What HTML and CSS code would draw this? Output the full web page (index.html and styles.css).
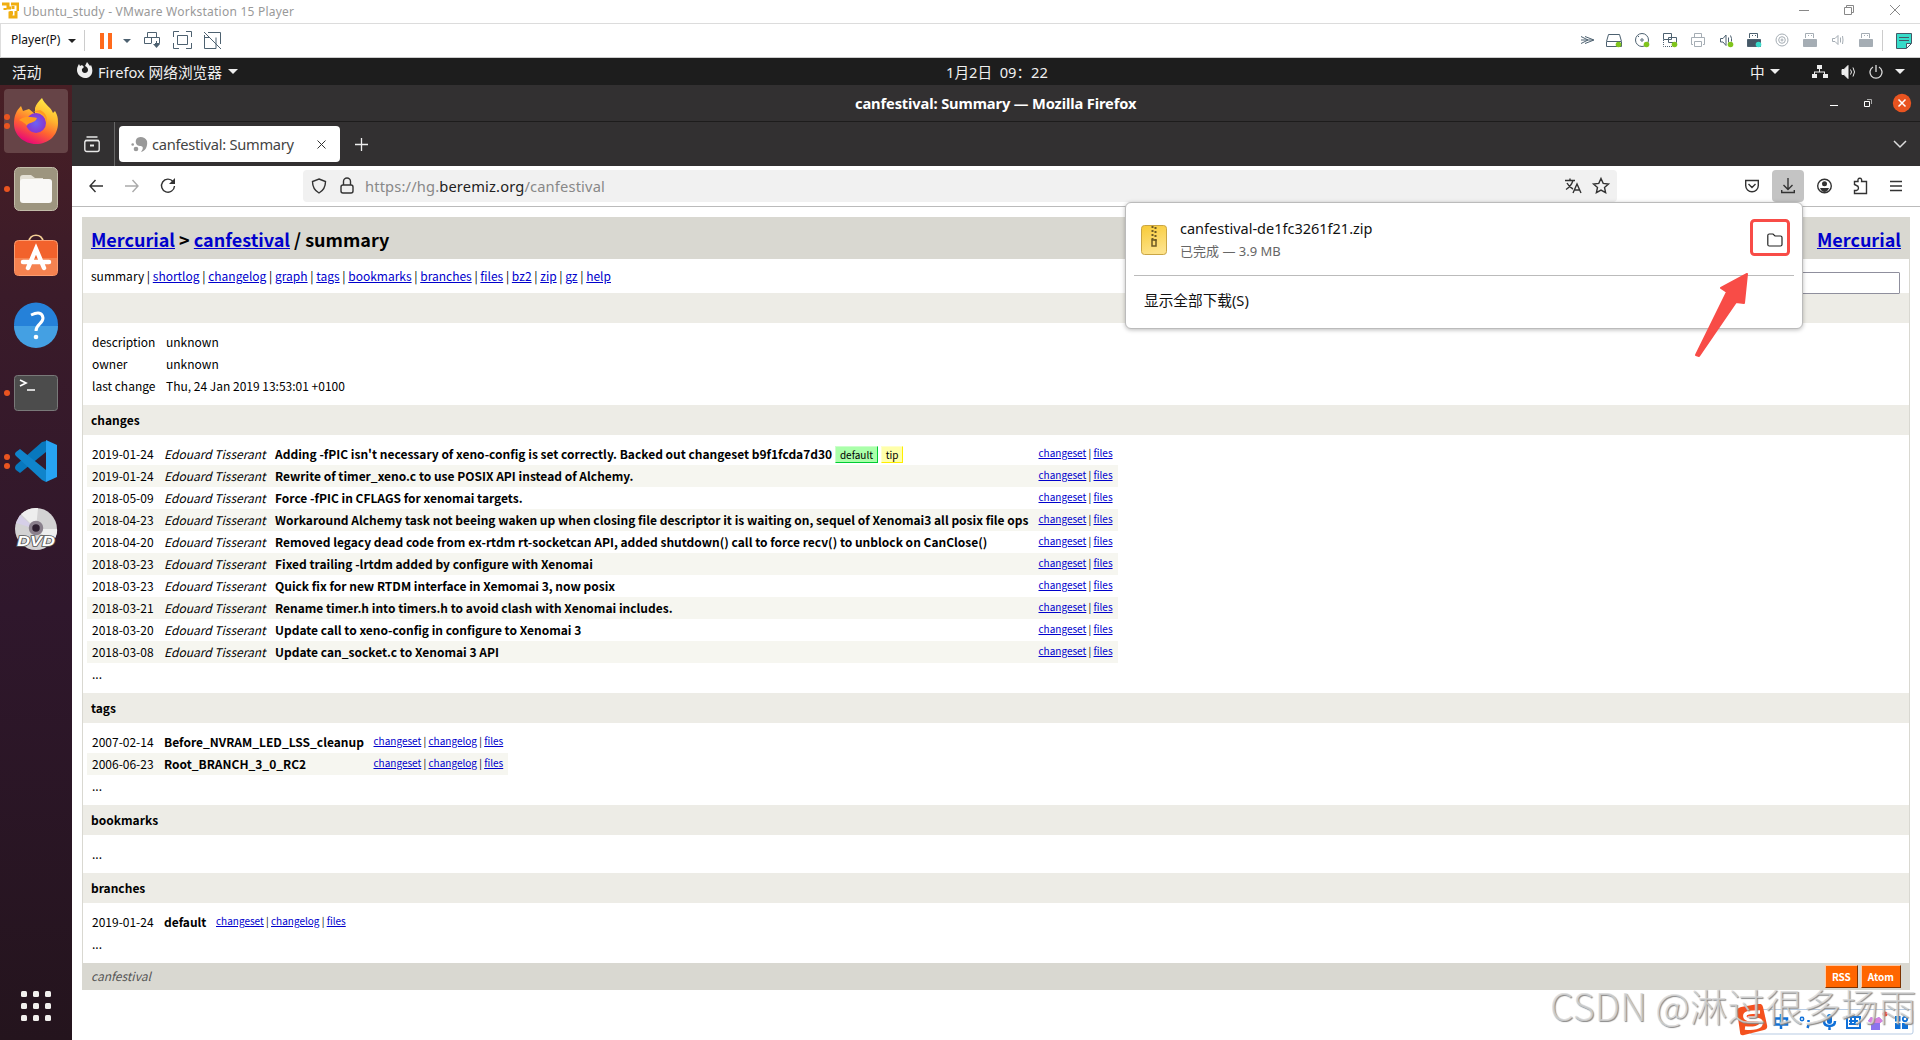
FILE: index.html
```html
<!DOCTYPE html>
<html lang="zh-CN">
<head>
<meta charset="utf-8">
<title>Ubuntu_study - VMware Workstation 15 Player</title>
<link rel="stylesheet" href="styles.css">
</head>
<body>
<header class="vm-title">
  <svg class="vm-logo" width="17" height="17" viewBox="0 0 17 17" fill="none" stroke="#f0ae10" stroke-width="3"><path d="M0 2h6v4h3M9 2h7v7M3 6v2M11 4v3M14 9v6H8v-4h3M9 15V9" /></svg>
  <span class="vm-name">Ubuntu_study - VMware Workstation 15 Player</span>
  <svg class="vm-win" width="120" height="20" viewBox="0 0 120 20" fill="none" stroke="#888" stroke-width="1"><path d="M7 10.500h10M52.500 7.500h7v7h-7zM54.500 7v-1.500h7v7H60M98 5l10 10M108 5l-10 10"/></svg>
</header>
<nav class="vm-bar">
  <span class="player">Player(P)</span><i class="caret dark"></i><i class="sep s1"></i>
  <svg class="pause" width="12" height="16"><path fill="#ff6a1c" d="M0 0h4v16H0zM8 0h4v16H8z"/></svg><i class="caret slate"></i>
  <svg class="vm-tools" width="80" height="20" viewBox="0 0 80 20" fill="none" stroke="#4d6170"><path d="M4.500 7.500v-5h9v5M1.500 7.500h15v6H12M1.500 7.500v6H8M8.500 7.500v6M13.500 11v6M30.500 7V1.500H36M43 1.500h5.500V7M48.500 13v5.500H43M36 18.500h-5.500V13M34.500 5.500h10v9h-10zM65 2.500h12.500V14M61.500 5v13.500H73M61.500 7.500H66M73 7.500v11M61 2l17 17"/><path d="M10 14h7l-3.500 4z" fill="#4d6170" stroke="none"/></svg>
  <div class="devices">
    <svg viewBox="0 0 20 20"><path d="M5 6.500l7 3.500-7 3.500M9 6.500l9 3.500-9 3.500M5 10h12" /></svg>
    <svg viewBox="0 0 20 20"><path d="M4.500 4.500h11l2 7v5h-15v-5zM3 11.500h14"/><circle class="g" cx="14.500" cy="14.500" r="2.800"/></svg>
    <svg viewBox="0 0 20 20"><circle cx="10" cy="10" r="6.500"/><circle cx="10" cy="10" r="1.200"/><path d="M6 7l1-1"/><circle class="g" cx="14.500" cy="14.500" r="2.800"/></svg>
    <svg viewBox="0 0 20 20"><path d="M3.500 3.500h8v6h-8zM8.500 7.500h8v5h-8z"/><path stroke-dasharray="1 1" d="M3.500 10v6.500H12"/><circle class="g" cx="14.500" cy="14.500" r="2.800"/></svg>
    <svg class="off" viewBox="0 0 20 20"><path d="M6.500 7.500v-4h7v4M5 14.500H3.500v-7h13v7H15M6.500 11.500h7v5h-7z"/></svg>
    <svg viewBox="0 0 20 20"><path d="M4.500 8.500H7l3-3.500v10.500l-3-3.500H4.500zM12.500 7.500v5M14.500 5.500q1.500 3 1 6"/><circle class="g" cx="14.500" cy="14.500" r="2.800"/></svg>
    <svg viewBox="0 0 20 20"><path d="M5.500 8V3.500h8V8M8 5.500h1M11 5.500h1"/><path fill="#455866" d="M3.500 9.500h13v7h-13z"/><circle cx="14.500" cy="14.500" r="2.800" fill="#38dccb" stroke="none"/></svg>
    <svg class="off" viewBox="0 0 20 20"><circle cx="10" cy="10" r="6"/><circle cx="10" cy="10" r="3.300"/><circle cx="10" cy="10" r="1"/></svg>
    <svg class="off" viewBox="0 0 20 20"><path d="M5.500 8V3.500h8V8M8 5.500h1M11 5.500h1"/><path fill="#a5adb4" d="M3.500 9.500h13v7h-13z"/></svg>
    <svg class="off" viewBox="0 0 20 20"><path d="M4.500 8.500H7l3-3v9l-3-3H4.500zM12.500 7.500v5M14.500 6q1 4 0 8"/></svg>
    <svg class="off" viewBox="0 0 20 20"><path d="M5.500 8V3.500h8V8M8 5.500h1M11 5.500h1"/><path fill="#a5adb4" d="M3.500 9.500h13v7h-13z"/></svg>
  </div>
  <i class="sep s2"></i>
  <svg class="note" width="16" height="16" fill="#36dcc9" stroke="#455866"><path d="M.5.5h15v10l-5 5H.5zM15 10.500h-4.500V15M3 4.500h10M3 7.500h10"/></svg>
</nav>

<div class="gnome">
  <span class="act">活动</span>
  <svg class="ffmono" width="17" height="17" viewBox="0 0 17 17"><path fill="#eee" fill-rule="evenodd" d="M1 8C1 5 2 4 3 2l1 2 2-1 2 2-2 2c-1 5 6 5 6 1 0-2-1-3-3-4l2-4 3 4 1-1c3 6 1 13-6 13C4 15.500 1 12 1 8z"/></svg>
  <span class="app">Firefox 网络浏览器</span><i class="caret big"></i>
  <span class="clock">1月2日&nbsp; 09：22</span>
  <span class="ime">中</span><i class="caret big"></i>
  <svg class="net" width="16" height="14" fill="#eee"><path d="M5 0h5v4H8v2.500h5V9h3v4h-5V9h1V7.500H3V9h2v4H0V9h2V6.500h5V4H5z"/></svg>
  <svg class="vol" width="16" height="14" fill="none" stroke="#eee"><path fill="#eee" d="M1 4.500h2l4-4v13l-4-4H1z"/><path d="M9.500 4.500q2 2.500 0 5M12 2.500q3 4.500 0 9"/></svg>
  <svg class="pow" width="14" height="14" fill="none" stroke="#ddd"><path stroke-width="1.300" d="M4 2a6 6 0 1 0 6 0M7 0v7"/></svg><i class="caret big last"></i>
</div>

<div class="desk">
  <aside class="dock">
    <div class="tile on two"><svg viewBox="0 0 46 48" width="46" height="48"><defs><linearGradient id="fo" x1=".75" y1="0" x2=".3" y2="1"><stop offset="0" stop-color="#fff14a"/><stop offset=".35" stop-color="#ffb82e"/><stop offset=".65" stop-color="#ff6430"/><stop offset="1" stop-color="#e6007d"/></linearGradient><radialGradient id="fp"><stop offset="0" stop-color="#6a63f5"/><stop offset="1" stop-color="#8a35cf"/></radialGradient></defs><path fill="url(#fo)" d="M1 27C1 19 3 14 8 9l2 5 6-2 6 5 0-6C23 7 26 4 29 1c3 7 9 9 11 15l2-2c3 5 3 8 3 12 0 13-10 21-22 21S1 38 1 27z"/><circle cx="23" cy="26" r="10" fill="url(#fp)"/><path fill="#ff9b20" d="M6 23c6-5 13-3 18-2-2 6-10 4-10 8-2-3-4-4-8-6zM19 15c8-1 15 4 14 12 3-6-1-12-6-14z"/></svg></div>
    <div class="tile one"><svg viewBox="0 0 46 46" width="46" height="46"><rect x="1.500" y="1.500" width="43" height="43" rx="5" fill="#9d957f" stroke="#c2bca9"/><path fill="#e4e0d5" d="M7 12q0-3 3-3h8l4 3h8v8H7z"/><rect x="7" y="13" width="32" height="24" rx="3" fill="#f9f8f6"/></svg></div>
    <div class="tile"><svg viewBox="0 0 46 46" width="46" height="46"><path d="M16 8c0-9 14-9 14 0" fill="none" stroke="#f3cf95" stroke-width="1.700"/><rect x="1.500" y="6.500" width="43" height="35" rx="4" fill="#f2622c" stroke="#fb9c70"/><path fill="#f58250" d="M2 24h42v14q0 3-3 3H5q-3 0-3-3z"/><path d="M15 34l8-19 8 19M10 28h26" fill="none" stroke="#fff" stroke-width="4.500" stroke-linecap="round"/></svg></div>
    <div class="tile"><svg viewBox="0 0 46 46" width="46" height="46"><circle cx="23" cy="22.500" r="22" fill="#2581d9"/><path fill="#44a0e3" d="M1 24h44a22 22 0 0 1-44 0z"/><path d="M18 13q11-5 12 3c0 6-7 6-7 13" fill="none" stroke="#fff" stroke-width="3"/><circle cx="23" cy="35" r="2.300" fill="#fff"/></svg></div>
    <div class="tile one"><svg viewBox="0 0 46 46" width="46" height="46"><rect x="1.500" y="5.500" width="43" height="35" rx="3" fill="#4c4c4c" stroke="#797979"/><path d="M7 10l6 3-6 3M14 20h8" fill="none" stroke="#fff" stroke-width="1.700"/></svg></div>
    <div class="tile two"><svg viewBox="0 0 46 46" width="46" height="46"><path fill="#0878bd" d="M3 32l4 3L33 14V3L29 4 3 27q-2 3 0 5z"/><path fill="#1084cb" d="M3 14l4-3 26 21v12l-4-2L3 18q-2-2 0-4z"/><path fill="#27a3f2" d="M33 2l11 5v32l-11 5z"/></svg></div>
    <div class="tile"><svg viewBox="0 0 46 46" width="46" height="46"><circle cx="23" cy="23" r="21" fill="#d3d2d3"/><path fill="#eee" d="M23 23L8 8q8-7 17-6zM23 23l16 14q6-8 5-14z"/><path fill="#d6cfe8" d="M23 23L3 17l4-8z"/><circle cx="23" cy="22" r="5.500" fill="#2e2030" stroke="#8a808c" stroke-width="3.500"/><text x="4" y="40" class="dvd" textLength="38" lengthAdjust="spacingAndGlyphs">DVD</text></svg></div>
    <div class="apps"><i></i><i></i><i></i><i></i><i></i><i></i><i></i><i></i><i></i></div>
  </aside>

  <main class="firefox">
    <div class="ff-title"><span class="ff-name">canfestival: Summary — Mozilla Firefox</span>
      <svg class="ff-win" width="90" height="20" viewBox="0 0 90 20" fill="none" stroke="#fff"><path d="M8 12.500h8M42.500 8.500h5v5h-5z"/><path stroke="#aaa" d="M45 6.500h4.500V11"/><circle cx="80" cy="10" r="9.200" fill="#e95420" stroke="none"/><path stroke-width="1.500" d="M76.500 6.500l7 7M83.500 6.500l-7 7"/></svg></div>
    <div class="tabs">
      <svg class="recent" width="16" height="17" fill="none" stroke="#e8e8e8" stroke-width="1.400"><path d="M2.500 1h11M1 4.500h14"/><rect x=".8" y="4.500" width="14.400" height="11" rx="2"/><path d="M6 9.500h4" stroke-width="2"/></svg>
      <div class="tab">
        <svg width="17" height="17" viewBox="0 0 17 17" fill="#999"><path d="M5 4C6 0 14 0 16 5c1 6-2 10-6 11 3-4 2-6-1-6-3 0-5-3-4-6z"/><circle cx="5" cy="13" r="2.300"/><circle cx="1.700" cy="8.500" r="1.300"/></svg>
        <span class="tab-name">canfestival: Summary</span>
        <svg class="tab-x" width="9" height="9" stroke="#333" fill="none"><path d="M.5.5l8 8M8.500.5l-8 8"/></svg>
      </div>
      <svg class="plus" width="13" height="13" stroke="#eee" stroke-width="1.300"><path d="M6.500 0v13M0 6.500h13"/></svg>
      <svg class="chev" width="14" height="9" fill="none" stroke="#ddd" stroke-width="1.500"><path d="M1 1l6 6 6-6"/></svg>
    </div>
    <div class="navbar">
      <svg class="btn" viewBox="0 0 32 32"><path d="M23 16H10M15.500 10L10 16l5.500 6"/></svg>
      <svg class="btn dim" viewBox="0 0 32 32"><path d="M9 16h13M16.500 10l5.500 6-5.500 6"/></svg>
      <svg class="btn" viewBox="0 0 32 32"><path d="M21 11.500a6.500 6.500 0 1 0 1.500 4.500"/><path fill="#333" stroke="none" d="M23 8v6h-6z"/></svg>
      <div class="url">
        <svg viewBox="0 0 28 32"><path d="M14 9l6.500 2.500c0 6-2 9-6.500 11.500-4.500-2.500-6.500-5.500-6.500-11.500z"/></svg>
        <svg viewBox="0 0 28 32"><rect x="8" y="15" width="12" height="8" rx="2"/><path d="M10.500 15v-3.500a3.500 3.500 0 0 1 7 0V15"/></svg>
        <span class="addr">https://hg.<b>beremiz.org</b>/canfestival</span>
        <svg class="tr" viewBox="0 0 28 32"><path d="M6 10.500h10M11 8.500v2M14 10.500q-2 6-7 9M8 13q2 4 6 6M14 23l4-9 4 9M15.500 20h5"/></svg>
        <svg viewBox="0 0 28 32"><path d="M14 8.500l2.200 4.900 5.300.6-4 3.500 1.100 5.200-4.600-2.600-4.600 2.600 1.100-5.200-4-3.500 5.300-.6z"/></svg>
      </div>
      <svg class="btn pocket" viewBox="0 0 32 32"><path d="M9.700 10.500h12.600v5a6.300 6.300 0 0 1-12.600 0zM12.500 14l3.500 3.500 3.500-3.500"/></svg>
      <svg class="btn down" viewBox="0 0 32 32"><path d="M16 8v11M11.500 15l4.500 4.500 4.500-4.500M9.700 20v2.500h12.600V20"/></svg>
      <svg class="btn" viewBox="0 0 32 32"><circle cx="16.500" cy="16" r="6.800"/><circle cx="16.500" cy="13.800" r="2.500" fill="#333" stroke="none"/><path d="M12 18h9q-1.500 4-4.500 4t-4.500-4z" fill="#333" stroke="none"/></svg>
      <svg class="btn" viewBox="0 0 32 32"><path d="M10.500 14.500v-3H14q-.5-3.300 1.800-3.300t1.800 3.300h4.900v12h-12v-3h2q2-.5 2-2.500t-2-2.500z"/></svg>
      <svg class="btn" viewBox="0 0 32 32"><path d="M10 11.500h12M10 16h12M10 20.500h12"/></svg>
    </div>

    <section class="page">
      <div class="hg">
        <div class="hg-head"><div><a>Mercurial</a> &gt; <a>canfestival</a> / summary</div><a>Mercurial</a></div>
        <div class="hg-nav"><span>summary | <a>shortlog</a> | <a>changelog</a> | <a>graph</a> | <a>tags</a> | <a>bookmarks</a> | <a>branches</a> | <a>files</a> | <a>bz2</a> | <a>zip</a> | <a>gz</a> | <a>help</a></span><div class="search"></div></div>
        <div class="band"></div>
        <div class="meta"><span>description</span><span>unknown</span><span>owner</span><span>unknown</span><span>last change</span><span>Thu, 24 Jan 2019 13:53:01 +0100</span></div>
        <div class="band">changes</div>
        <div class="list changes">
          <div class="row"><span>2019-01-24</span><i>Edouard Tisserant</i><b>Adding -fPIC isn't necessary of xeno-config is set correctly. Backed out changeset b9f1fcda7d30 <em class="lab green">default</em> <em class="lab yellow">tip</em></b><small><a>changeset</a> | <a>files</a></small></div>
          <div class="row"><span>2019-01-24</span><i>Edouard Tisserant</i><b>Rewrite of timer_xeno.c to use POSIX API instead of Alchemy.</b><small><a>changeset</a> | <a>files</a></small></div>
          <div class="row"><span>2018-05-09</span><i>Edouard Tisserant</i><b>Force -fPIC in CFLAGS for xenomai targets.</b><small><a>changeset</a> | <a>files</a></small></div>
          <div class="row"><span>2018-04-23</span><i>Edouard Tisserant</i><b>Workaround Alchemy task not beeing waken up when closing file descriptor it is waiting on, sequel of Xenomai3 all posix file ops</b><small><a>changeset</a> | <a>files</a></small></div>
          <div class="row"><span>2018-04-20</span><i>Edouard Tisserant</i><b>Removed legacy dead code from ex-rtdm rt-socketcan API, added shutdown() call to force recv() to unblock on CanClose()</b><small><a>changeset</a> | <a>files</a></small></div>
          <div class="row"><span>2018-03-23</span><i>Edouard Tisserant</i><b>Fixed trailing -lrtdm added by configure with Xenomai</b><small><a>changeset</a> | <a>files</a></small></div>
          <div class="row"><span>2018-03-23</span><i>Edouard Tisserant</i><b>Quick fix for new RTDM interface in Xemomai 3, now posix</b><small><a>changeset</a> | <a>files</a></small></div>
          <div class="row"><span>2018-03-21</span><i>Edouard Tisserant</i><b>Rename timer.h into timers.h to avoid clash with Xenomai includes.</b><small><a>changeset</a> | <a>files</a></small></div>
          <div class="row"><span>2018-03-20</span><i>Edouard Tisserant</i><b>Update call to xeno-config in configure to Xenomai 3</b><small><a>changeset</a> | <a>files</a></small></div>
          <div class="row"><span>2018-03-08</span><i>Edouard Tisserant</i><b>Update can_socket.c to Xenomai 3 API</b><small><a>changeset</a> | <a>files</a></small></div>
        </div>
        <div class="more">...</div>
        <div class="band">tags</div>
        <div class="list tags">
          <div class="row"><span>2007-02-14</span><b>Before_NVRAM_LED_LSS_cleanup</b><small><a>changeset</a> | <a>changelog</a> | <a>files</a></small></div>
          <div class="row"><span>2006-06-23</span><b>Root_BRANCH_3_0_RC2</b><small><a>changeset</a> | <a>changelog</a> | <a>files</a></small></div>
        </div>
        <div class="more">...</div>
        <div class="band">bookmarks</div>
        <div class="list"></div>
        <div class="more">...</div>
        <div class="band">branches</div>
        <div class="list branches">
          <div class="row"><span>2019-01-24</span><b>default</b><small><a>changeset</a> | <a>changelog</a> | <a>files</a></small></div>
        </div>
        <div class="more">...</div>
        <div class="hg-foot"><i>canfestival</i><span class="feed">RSS</span><span class="feed">Atom</span></div>
      </div>
    </section>
  </main>
</div>

<div class="popup">
  <div class="dl">
    <svg width="26" height="32" viewBox="0 0 26 32"><defs><linearGradient id="z" x2=".3" y2="1"><stop offset="0" stop-color="#f8ca35"/><stop offset="1" stop-color="#fde289"/></linearGradient></defs><rect x=".5" y="1.500" width="25" height="29" rx="3" fill="url(#z)" stroke="#c9a545"/><path d="M11.500 2v14M14.500 3v14" stroke="#6d5a25" stroke-width="2" stroke-dasharray="2 2"/><path d="M11 16h4v6h-4z" fill="none" stroke="#6d5a25" stroke-width="1.500"/></svg>
    <div class="dl-text"><span class="dl-name">canfestival-de1fc3261f21.zip</span><span class="dl-sub">已完成 — 3.9 MB</span></div>
    <svg class="folder" width="16" height="14" fill="none" stroke="#222" stroke-width="1.200"><path d="M.8 2.500q0-1.500 1.500-1.500H6l2 2h5.500q1.500 0 1.500 1.500v7q0 1.500-1.500 1.500H2.300Q.8 13 .8 11.500z"/></svg>
  </div>
  <div class="all">显示全部下载(S)</div>
</div>
<svg class="mark" width="110" height="150" viewBox="0 0 110 150"><rect x="61.500" y="10.500" width="37" height="34" rx="3" fill="none" stroke="#f84c47" stroke-width="3"/><path fill="#f84c47" stroke="#f84c47" stroke-width="2" stroke-linejoin="round" d="M57 64L31 78l6 4L6 145l3 1L46 92l8 1z"/></svg>

<div class="sogou">
  <svg width="180" height="34" viewBox="0 0 180 34"><rect x="14" y="5.500" width="163" height="24.500" rx="2" fill="#fff" stroke="#b7cbe3"/><path fill="#f4511e" d="M1 7q0-3 4-4l17-3q4-1 5 3l4 18q1 4-3 5L8 31q-4 1-4-3z"/><path d="M24 8C12 8 8 9 9 13c1 5 15 0 16 5 1 6-9 7-16 6" fill="none" stroke="#fff" stroke-width="3.500"/><g fill="none" stroke="#1070d8" stroke-width="2.500"><path d="M39 14.500h12v6H39zM45 10v15"/><circle cx="66" cy="15" r="1.700" stroke-width="1.500"/><path d="M72.500 16v2M72.500 21l-1 3M88 17q0 5 5.500 5t5.500-5M93.500 22v4"/><path stroke-width="5" stroke-linecap="round" d="M93.500 12.500v5"/><path stroke-width="2" d="M111 13h13v11h-13zM113 17h9M113 20h9M115 14v6M119 14v6"/></g><path fill="#8b73ee" d="M135 13l4 2 4-2 4 4-3 2v7h-9v-7l-3-2z"/><path fill="#d880dd" d="M135 13l4 2 4-2 4 4-3 2h-9l-3-2z"/><circle cx="149" cy="10" r="2.500" fill="#f24b35"/><path fill="#1070d8" d="M159 12h5.500v5.500H159zM159 19h5.500v6H159zM166 19h6v6h-6z"/><circle cx="169" cy="15" r="2.200" fill="none" stroke="#1070d8" stroke-width="1.800"/></svg>
</div>
<div class="csdn">CSDN @淋过很多场雨</div>
</body>
</html>
```
FILE: styles.css
```css
* { box-sizing: border-box; }
body { margin: 0; width: 1920px; height: 1040px; overflow: hidden; position: relative; display: flex; flex-direction: column; background: #fff; font-family: "Noto Sans", "Noto Sans CJK SC", sans-serif; }
svg { flex: none; display: block; }
.vm-title { height: 24px; flex: none; display: flex; align-items: center; border-bottom: 1px solid #dcdcdc; padding-left: 2px; }
.vm-logo { margin-top: -2px; }
.vm-name { margin-left: 4px; font-size: 12px; letter-spacing: .23px; color: #999; white-space: nowrap; }
.vm-win { margin: -4px 8px 0 auto; }
.vm-bar { height: 34px; flex: none; display: flex; align-items: center; border-bottom: 1px solid #ccc; border-left: 1px solid #ddd; padding-left: 10px; font-size: 12px; color: #111; }
.player { width: 57px; margin-top: -3px; }
.caret { flex: none; border: 4px solid transparent; border-top-color: #222; border-bottom: 0; }
.slate { border-top-color: #4d6170; margin-left: 11px; }
.big { border-width: 5px 5px 0; border-top-color: #eee; }
.sep { width: 1px; height: 21px; background: #ccc; flex: none; }
.s1 { margin: 0 15px 0 8px; }
.vm-tools { margin: -1px 0 0 12px; }
.devices { display: flex; margin-left: auto; margin-top: -1px; }
.devices svg { width: 28px; height: 20px; fill: none; stroke: #4d6170; }
.devices .off { stroke: #a5adb4; }
.devices .g { fill: #80c41c; stroke: none; }
.s2 { margin: 0 13px 0 2px; }
.note { margin-right: 8px; }
.gnome { position: relative; height: 27px; flex: none; display: flex; align-items: center; background: #1d1d1d; color: #f0f0f0; font-size: 14.670px; white-space: nowrap; }
.act { margin-left: 12px; width: 64px; }
.ffmono { margin-top: -3px; }
.app { width: 130px; margin-left: 5px; }
.clock { margin-left: 708px; width: 110px; }
.ime { margin-left: 694px; width: 20px; }
.net { margin-left: 32px; }
.vol { margin-left: 13px; }
.pow { margin-left: 12px; }
.last { margin-left: 12px; }
.desk { flex: 1; display: flex; min-height: 0; }
.dock { width: 72px; flex: none; display: flex; flex-direction: column; background: linear-gradient(#491f25, #3a1b29 22%, #2f172c 55%, #24141d); padding-top: 4px; }
.tile { position: relative; width: 64px; height: 64px; margin: 0 4px 4px; display: flex; align-items: center; justify-content: center; border-radius: 4px; }
.on { background: #664447; }
.one::before, .two::before, .two::after { content: ""; position: absolute; left: 0; top: 29px; width: 6px; height: 6px; border-radius: 3px; background: #e95420; }
.two::before { top: 25px; }
.two::after { top: 34px; }
.dvd { font: italic 900 14px "Liberation Sans", sans-serif; fill: #fff; stroke: #555; stroke-width: 1.500px; paint-order: stroke; }
.apps { margin: auto 0 19px 21px; display: grid; grid-template-columns: repeat(3, 6px); gap: 6px; }
.apps i { width: 6px; height: 6px; border-radius: 1.500px; background: #f2f0ee; }
.firefox { flex: 1; min-width: 0; display: flex; flex-direction: column; }
.ff-title { height: 37px; flex: none; background: #323031; border-bottom: 1px solid #1d1c1c; display: flex; align-items: center; color: #fff; font-size: 14.670px; font-weight: 700; letter-spacing: -.13px; }
.ff-name { margin-left: 783px; white-space: nowrap; }
.ff-win { margin-left: auto; margin-right: 8px; }
.tabs { height: 44px; flex: none; background: #323031; display: flex; align-items: center; }
.recent { margin-left: 12px; }
.tab { position: relative; width: 221px; height: 36px; margin-left: 19px; background: #fff; border-radius: 4px; display: flex; align-items: center; padding-left: 12px; color: #444; font-size: 14.670px; }
.tab::before { content: ""; position: absolute; left: -5px; top: -4px; height: 44px; width: 1px; background: #666; }
.tab-name { margin-left: 4px; white-space: nowrap; width: 165px; letter-spacing: -.27px; }
.plus { margin-left: 15px; }
.chev { margin: 0 13px 0 auto; }
.navbar { height: 41px; flex: none; display: flex; align-items: center; border-bottom: 1px solid #bbb; padding: 0 8px; gap: 4px; }
.navbar svg { fill: none; stroke: #333; stroke-width: 1.400; }
.btn { width: 32px; height: 32px; border-radius: 4px; }
.navbar .dim { stroke: #aaa; }
.down { background: #c4c4c4; }
.url { width: 1314px; height: 32px; margin-left: 115px; background: #f1f1f1; border-radius: 4px; display: flex; align-items: center; padding: 0 2px; font-size: 14.670px; color: #888; }
.url svg { width: 28px; height: 32px; }
.addr { margin-left: 4px; white-space: nowrap; letter-spacing: .16px; }
.addr b { font-weight: 400; color: #222; }
.tr { margin-left: auto; }
.pocket { margin-left: auto; }
.page { flex: 1; padding: 10px 10px 0; font: 12px/22px "Noto Sans CJK SC", sans-serif; color: #000; }
.hg { border: solid #d9d8d1; border-width: 0 1px; }
.page a { color: #0000cc; text-decoration: underline; }
.hg-head { height: 42px; background: #d9d8d1; display: flex; justify-content: space-between; align-items: center; padding: 2px 8px 0; font-size: 18px; font-weight: 700; }
.hg-nav { height: 34px; display: flex; justify-content: space-between; padding: 6px 8px; }
.search { width: 180px; height: 22px; border: 1px solid #8f8f9d; border-radius: 1px; background: #fff; margin: 7px 1px 0 0; position: relative; }
.band { height: 30px; background: #edece6; padding: 4px 8px; font-weight: 700; }
.meta { display: grid; grid-template-columns: 74px 1fr; padding: 8px 9px; }
.list { padding: 8px 4px 0; }
.row { width: max-content; display: grid; padding: 0 5px; height: 22px; white-space: nowrap; }
.row:nth-child(even) { background: #f6f6f0; }
.changes .row { grid-template-columns: 72px 111px 763.500px 74.500px; }
.tags .row { grid-template-columns: 72px 209.500px 129.500px; }
.branches .row { grid-template-columns: 72px 52px 130px; }
.row small { font-size: 10px; margin-top: -1px; }
.lab { font: 400 10px/15px "Noto Sans CJK SC", sans-serif; display: inline-block; padding: 0 4px; border: 1px solid; vertical-align: 0; }
.green { background: #aaffaa; border-color: #ccffcc #00cc33 #00cc33 #ccffcc; }
.yellow { background: #ffffaa; border-color: #ffffcc #ffee00 #ffee00 #ffffcc; }
.more { height: 30px; padding: 0 9px; }
.hg-foot { height: 27px; background: #d9d8d1; display: flex; align-items: center; gap: 3px; padding: 0 8px; color: #555; }
.hg-foot i { flex: 1; margin-top: -2px; }
.feed { background: #ff6600; color: #fff; font-weight: 700; font-size: 10px; height: 23px; line-height: 21px; padding: 0 6px; border: 1px solid; border-color: #ffc9a5 #7d3302 #7d3302 #ffc9a5; }
.popup { position: absolute; left: 1125px; top: 202px; width: 678px; height: 127px; background: #fff; border: 1px solid #bbb; border-radius: 6px; box-shadow: 0 1px 4px #0004; padding: 0 8px; color: #111; }
.dl { height: 73px; border-bottom: 1px solid #bbb; display: flex; align-items: center; padding: 2px 11px 0 7px; }
.dl-text { flex: 1; margin-left: 13px; display: flex; flex-direction: column; }
.dl-name { font-size: 14.500px; line-height: 23px; }
.dl-sub { font-size: 13px; line-height: 23px; color: #666; }
.folder { margin: -1px 0 0; }
.all { padding: 13px 10px; font-size: 14.670px; line-height: 22px; }
.mark { position: absolute; left: 1690px; top: 210px; }
.sogou { position: absolute; left: 1736px; top: 1004px; width: 180px; }
.csdn { position: absolute; left: 1550px; top: 978px; font: 300 37.800px/54px "Noto Sans CJK SC", sans-serif; color: #d8d8d8cc; text-shadow: 1px 1px 1px #888; white-space: nowrap; }
```
